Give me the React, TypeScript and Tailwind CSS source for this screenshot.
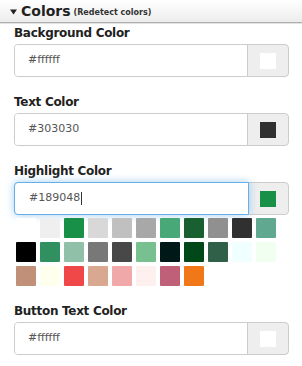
import type { ReactNode } from "react";

// ─── Colors panel ─────────────────────────────────────────────────────────────
// Section header + label/input rows, each input with a colour preview addon.

const PALETTE: string[][] = [
  ["#ffffff", "#efefef", "#189048", "#d8d8d8", "#c0c0c0", "#a8a8a8", "#48a878", "#186030", "#909090", "#303030", "#60a890"],
  ["#000000", "#309060", "#90c0a8", "#787878", "#484848", "#78c090", "#001818", "#004818", "#306048", "#f0ffff", "#f0fff0"],
  ["#c09078", "#ffffee", "#f04848", "#d8a890", "#f0a8a8", "#fff0f0", "#c06078", "#f07818"],
];

interface ColorFieldProps {
  label: string;
  value: string;
  focused?: boolean;
  children?: ReactNode;
}

function ColorField({ label, value, focused = false, children }: ColorFieldProps) {
  return (
    <div className="flex flex-col">
      <div className="h-4 text-[12px] leading-4 font-bold text-[#222] tracking-[-0.3px]">{label}</div>
      <div className="mt-[3px] flex h-[33px] w-[275px] rounded-[4px] border border-[#cccccc] bg-[#eeeeee]">
        <div
          className={
            focused
              ? "-m-px flex flex-1 items-center rounded-l-[4px] border border-[#66afe9] bg-white pl-[14px] shadow-[0_0_8px_rgba(102,175,233,0.6)]"
              : "flex flex-1 items-center rounded-l-[3px] border-r border-[#cccccc] bg-white pl-[13px]"
          }
        >
          <span className="text-[11px] text-[#555555]">{value}</span>
          {focused && <span className="ml-px h-[13px] w-px bg-[#333333]" />}
        </div>
        <div className="flex w-10 items-center justify-center">
          <div className="h-4 w-4" style={{ backgroundColor: value }} />
        </div>
      </div>
      {children}
    </div>
  );
}

export default function App() {
  return (
    <div className="h-[366px] w-[302px] bg-white font-['DejaVu_Sans',sans-serif] text-[#222]">
      <div className="flex h-[23px] items-center border-b border-[#b0b0b0] bg-gradient-to-b from-white to-[#ececec] pl-[10px] shadow-[0_1px_0_#e2e2e2]">
        <svg width="7" height="6" viewBox="0 0 7 6" className="mr-1 mt-px">
          <path d="M0 0.5 L7 0.5 L3.5 5.5 Z" fill="#222" />
        </svg>
        <span className="text-[14px] font-bold leading-none">Colors</span>
        <span className="ml-[3px] mt-[3px] text-[8px] font-bold leading-none text-[#333]">(Redetect colors)</span>
      </div>

      <div className="flex flex-col gap-[17px] pl-[14px] pt-[2px]">
        <ColorField label="Background Color" value="#ffffff" />
        <ColorField label="Text Color" value="#303030" />
        <ColorField label="Highlight Color" value="#189048" focused>
          <div className="mt-[3px] flex flex-col gap-1 pl-[2px]">
            {PALETTE.map((row, i) => (
              <div key={i} className="flex gap-1">
                {row.map((c, j) => (
                  <div key={j} className="h-5 w-5 rounded-[1px]" style={{ backgroundColor: c }} />
                ))}
              </div>
            ))}
          </div>
        </ColorField>
        <ColorField label="Button Text Color" value="#ffffff" />
      </div>
    </div>
  );
}
